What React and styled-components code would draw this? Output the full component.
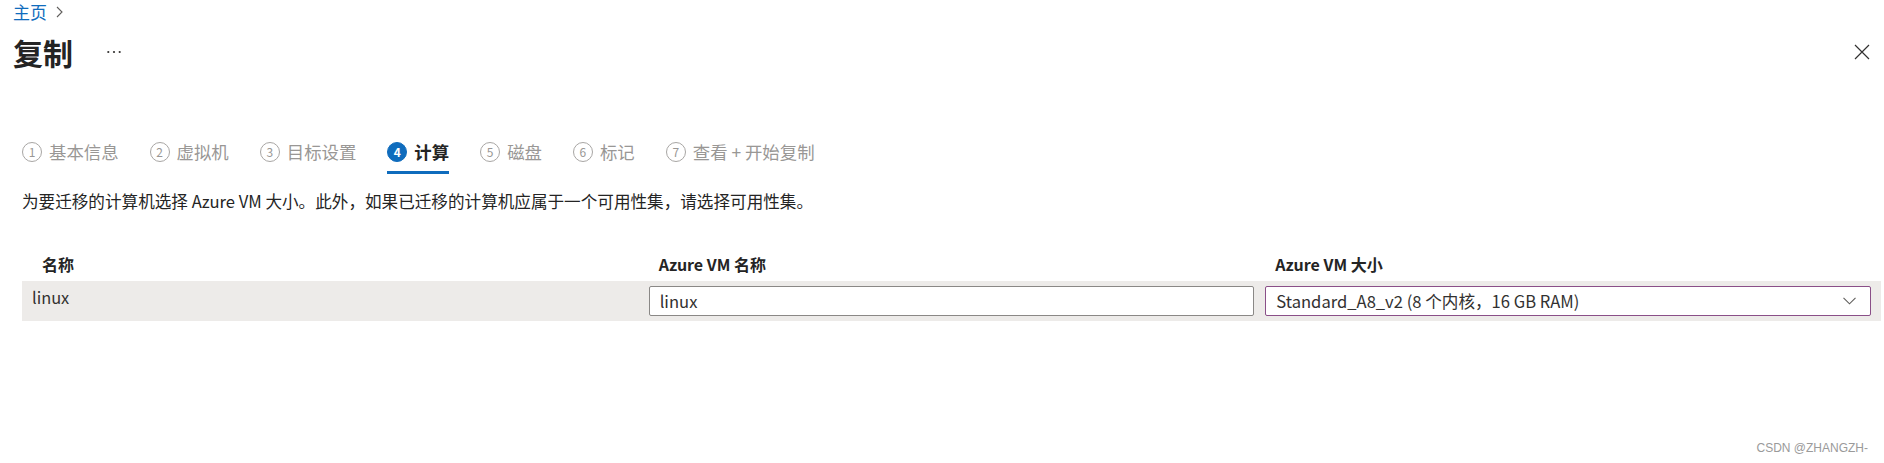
import React from 'react'
import styled, { createGlobalStyle } from 'styled-components'

const GlobalStyle = createGlobalStyle`
  html, body {
    margin: 0;
    padding: 0;
    background: #fff;
  }
  body {
    font-family: "Segoe UI", "Noto Sans CJK SC", sans-serif;
    color: #323130;
  }
`

const Page = styled.div`
  position: relative;
  height: 463px;
  overflow: hidden;
  background: #fff;
`

const Header = styled.header`
  padding: 0 14px 0 13px;
`

const Breadcrumb = styled.div`
  display: flex;
  align-items: center;
  gap: 9px;
  height: 24px;
  font-size: 17px;
  line-height: 24px;
  a {
    color: #0f6cbd;
    text-decoration: none;
  }
`

const TitleRow = styled.div`
  display: flex;
  align-items: center;
  justify-content: space-between;
  margin-top: 8px;
  height: 40px;
`

const TitleLeft = styled.div`
  display: flex;
  align-items: center;
  gap: 34px;
`

const Title = styled.h1`
  margin: 0;
  font-size: 30px;
  line-height: 40px;
  font-weight: 700;
  color: #242424;
`

const IconButton = styled.button`
  border: 0;
  background: none;
  padding: 0;
  display: flex;
  align-items: center;
  color: #323130;
  cursor: pointer;
`

const Content = styled.main`
  padding: 0 3px 0 22px;
`

const Tabs = styled.nav`
  display: flex;
  gap: 31px;
  margin-top: 68px;
`

const Tab = styled.div`
  display: flex;
  align-items: center;
  gap: 7px;
  height: 24px;
  padding-bottom: 7px;
  border-bottom: 3px solid ${p => (p.$active ? '#0f6cbd' : 'transparent')};
  font-size: 17.4px;
  line-height: 24px;
  font-weight: ${p => (p.$active ? 700 : 400)};
  color: ${p => (p.$active ? '#242424' : '#999795')};
`

const StepBadge = styled.span`
  box-sizing: border-box;
  width: 20px;
  height: 20px;
  border-radius: 50%;
  display: flex;
  align-items: center;
  justify-content: center;
  font-size: 12px;
  line-height: 1;
  font-weight: ${p => (p.$active ? 700 : 400)};
  border: 1px solid ${p => (p.$active ? '#0f6cbd' : '#a8a6a4')};
  background: ${p => (p.$active ? '#0f6cbd' : 'transparent')};
  color: ${p => (p.$active ? '#fff' : '#999795')};
`

const Description = styled.p`
  margin: 16px 0 0;
  font-size: 16.6px;
  line-height: 22px;
  color: #242424;
`

const Grid = styled.div`
  display: grid;
  grid-template-columns: repeat(3, 1fr);
  column-gap: 11px;
  padding: 0 10px;
`

const HeadRow = styled(Grid)`
  margin-top: 41px;
  height: 22px;
`

const HeadCell = styled.div`
  padding-left: 10px;
  font-size: 16px;
  line-height: 22px;
  font-weight: 600;
  color: #242424;
`

const BodyRow = styled(Grid)`
  margin-top: 6px;
  padding-top: 5px;
  padding-bottom: 5px;
  background: #edebe9;
  align-items: start;
`

const Cell = styled.div`
  font-size: 16.4px;
  line-height: 22px;
  color: #323130;
`

const Field = styled.div`
  box-sizing: border-box;
  height: 30px;
  display: flex;
  align-items: center;
  justify-content: space-between;
  padding: 0 14px 0 10px;
  background: #fff;
  border: 1px solid ${p => (p.$focus ? '#8a4f88' : '#8a8886')};
  border-radius: 2px;
  font-size: 16.6px;
  color: #323130;
`

const Watermark = styled.div`
  position: absolute;
  right: 16px;
  bottom: 8px;
  font-family: "Liberation Sans", Arial, sans-serif;
  font-size: 12px;
  color: #9a9a9a;
`

const steps = ['基本信息', '虚拟机', '目标设置', '计算', '磁盘', '标记', '查看 + 开始复制']

export default function App() {
  return (
    <Page>
      <GlobalStyle />
      <Header>
        <Breadcrumb>
          <a href="#">主页</a>
          <svg width="7" height="12" viewBox="0 0 7 12">
            <path d="M1 1l5 5-5 5" fill="none" stroke="#605e5c" strokeWidth="1.1" />
          </svg>
        </Breadcrumb>
        <TitleRow>
          <TitleLeft>
            <Title>复制</Title>
            <IconButton aria-label="更多">
              <svg width="14" height="4" viewBox="0 0 14 4">
                <circle cx="1.3" cy="2" r="1.1" fill="#323130" />
                <circle cx="7" cy="2" r="1.1" fill="#323130" />
                <circle cx="12.7" cy="2" r="1.1" fill="#323130" />
              </svg>
            </IconButton>
          </TitleLeft>
          <IconButton aria-label="关闭">
            <svg width="16" height="16" viewBox="0 0 16 16">
              <path d="M1 1l14 14M15 1L1 15" stroke="#323130" strokeWidth="1.2" />
            </svg>
          </IconButton>
        </TitleRow>
      </Header>
      <Content>
        <Tabs>
          {steps.map((s, i) => (
            <Tab key={s} $active={i === 3}>
              <StepBadge $active={i === 3}>{i + 1}</StepBadge>
              {s}
            </Tab>
          ))}
        </Tabs>
        <Description>
          为要迁移的计算机选择 Azure VM 大小。此外，如果已迁移的计算机应属于一个可用性集，请选择可用性集。
        </Description>
        <HeadRow>
          <HeadCell>名称</HeadCell>
          <HeadCell>Azure VM 名称</HeadCell>
          <HeadCell>Azure VM 大小</HeadCell>
        </HeadRow>
        <BodyRow>
          <Cell>linux</Cell>
          <Field>linux</Field>
          <Field $focus>
            Standard_A8_v2 (8 个内核，16 GB RAM)
            <svg width="13" height="8" viewBox="0 0 13 8">
              <path d="M0.5 0.8l6 6 6-6" fill="none" stroke="#605e5c" strokeWidth="1.1" />
            </svg>
          </Field>
        </BodyRow>
      </Content>
      <Watermark>CSDN @ZHANGZH-</Watermark>
    </Page>
  )
}
